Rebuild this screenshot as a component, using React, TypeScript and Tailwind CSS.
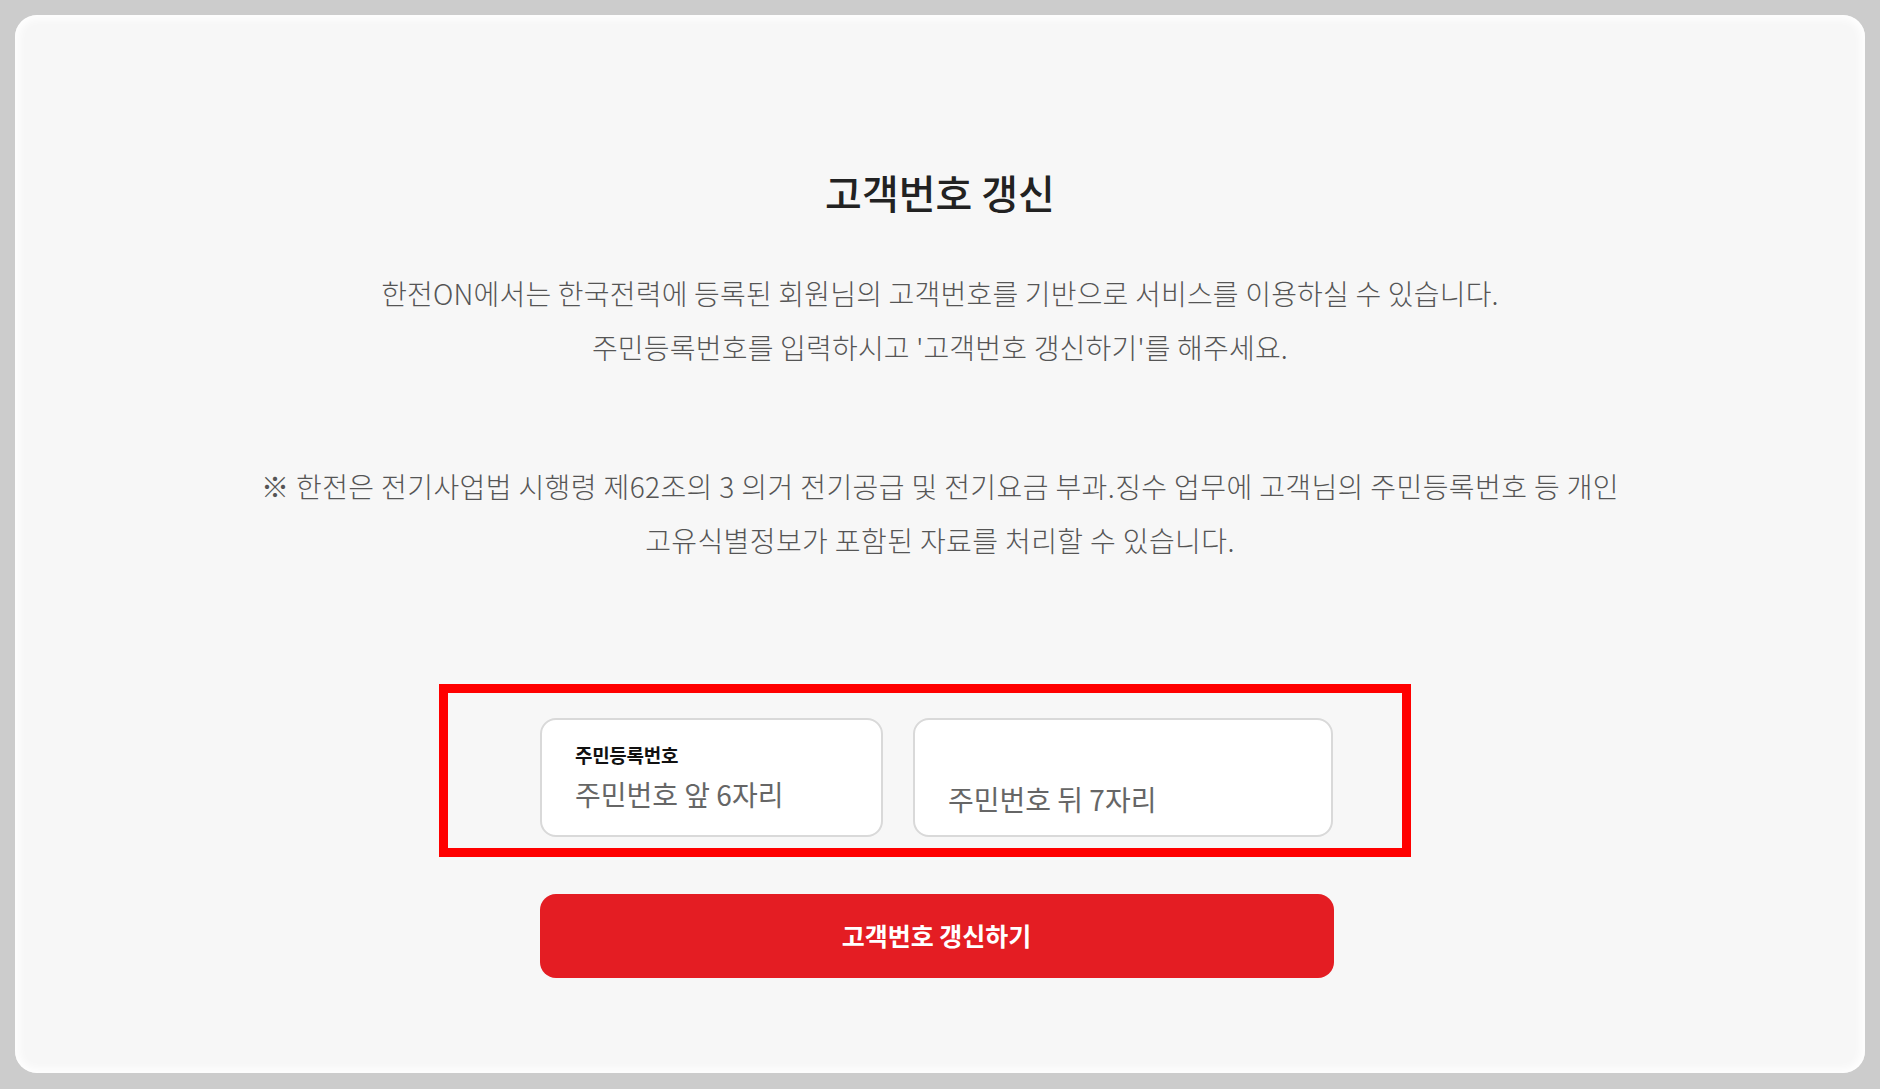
import React from 'react';

const font = { fontFamily: '"Noto Sans CJK KR", "Noto Sans", sans-serif' };

export default function App() {
  return (
    <div className="min-h-screen w-full bg-[#cccccc] p-[15px]" style={font}>
      <div className="flex h-[1058px] flex-col items-center rounded-[22px] bg-[#f7f7f7] pt-[150px] shadow-[inset_0_0_8px_4px_#ffffff]">
        {/* 제목 */}
        <h1 className="text-[40px] leading-[54px] font-medium text-[#222222]">고객번호 갱신</h1>

        <div className="mt-[47px] text-center text-[28px] leading-[54px] font-light tracking-[0.2px] text-[#555555]">
          <p>한전ON에서는 한국전력에 등록된 회원님의 고객번호를 기반으로 서비스를 이용하실 수 있습니다.</p>
          <p>주민등록번호를 입력하시고 '고객번호 갱신하기'를 해주세요.</p>
        </div>

        <div className="mt-[85px] text-center text-[28px] leading-[54px] font-light tracking-[0.4px] text-[#555555]">
          <p>※ 한전은 전기사업법 시행령 제62조의 3 의거 전기공급 및 전기요금 부과.징수 업무에 고객님의 주민등록번호 등 개인</p>
          <p>고유식별정보가 포함된 자료를 처리할 수 있습니다.</p>
        </div>

        {/* 입력 영역 */}
        <div className="relative mt-[151px] mr-[7px] flex gap-[30px]">
          <div className="flex h-[119px] w-[343px] flex-col justify-center rounded-[16px] border-2 border-[#d9d9d9] bg-white px-[33px]">
            <span className="text-[19px] leading-[24px] font-bold tracking-[-0.3px] text-[#111111]">주민등록번호</span>
            <span className="mt-[9px] text-[28px] leading-[36px] text-[#666666]">주민번호 앞 6자리</span>
          </div>
          <div className="flex h-[119px] w-[420px] flex-col justify-end rounded-[16px] border-2 border-[#d9d9d9] bg-white px-[33px] pb-[18px]">
            <span className="text-[28px] leading-[36px] text-[#666666]">주민번호 뒤 7자리</span>
          </div>
          {/* 강조 표시 */}
          <div className="pointer-events-none absolute top-[-34px] left-[-101px] h-[173px] w-[972px] border-[9px] border-[#ff0000]" />
        </div>

        <button className="mt-[57px] mr-[7px] h-[84px] w-[794px] rounded-[16px] bg-[#e41d23] text-[25px] font-bold text-white">
          고객번호 갱신하기
        </button>
      </div>
    </div>
  );
}
